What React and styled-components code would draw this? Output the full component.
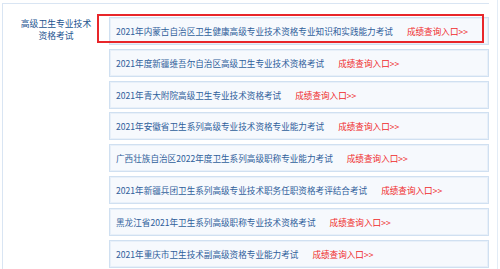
import styled, { createGlobalStyle } from "styled-components";

const exams = [
  { title: "2021年内蒙古自治区卫生健康高级专业技术资格专业知识和实践能力考试", marked: true },
  { title: "2021年度新疆维吾尔自治区高级卫生专业技术资格考试" },
  { title: "2021年青大附院高级卫生专业技术资格考试" },
  { title: "2021年安徽省卫生系列高级专业技术资格专业能力考试" },
  { title: "广西壮族自治区2022年度卫生系列高级职称专业能力考试" },
  { title: "2021年新疆兵团卫生系列高级专业技术职务任职资格考评结合考试" },
  { title: "黑龙江省2021年卫生系列高级职称专业技术资格考试" },
  { title: "2021年重庆市卫生技术副高级资格专业能力考试" },
];

export default function App() {
  return (
    <>
      <GlobalStyle />
      <Page>
        <Frame>
          <LabelCell>
            高级卫生专业技术
            <br />
            资格考试
          </LabelCell>
          <List>
            {exams.map((exam) => (
              <Row key={exam.title}>
                <Title>{exam.title}</Title>
                <Link>成绩查询入口&gt;&gt;</Link>
                {exam.marked && <Highlight />}
              </Row>
            ))}
          </List>
        </Frame>
      </Page>
    </>
  );
}

const GlobalStyle = createGlobalStyle`
  body {
    margin: 0;
    background: #fff;
    font-family: "Noto Sans CJK SC", "Liberation Sans", sans-serif;
    overflow: hidden;
  }
`;

const Page = styled.div`
  width: 498px;
  height: 269px;
  box-sizing: border-box;
  padding: 3px 0 0 2px;
  border-right: 1px solid #e3ecf6;
`;

const Frame = styled.div`
  width: 487px;
  height: 266px;
  box-sizing: border-box;
  display: flex;
  border-left: 1px solid #d9e5f3;
  border-top: 1px solid #d9e5f3;
`;

const LabelCell = styled.div`
  width: 106px;
  flex-shrink: 0;
  padding-top: 14px;
  text-align: center;
  font-size: 8.8px;
  line-height: 12px;
  color: #23548f;
`;

const List = styled.div`
  flex: 1;
  display: flex;
  flex-direction: column;
  gap: 3.8px;
  padding-top: 13px;
`;

const Row = styled.div`
  position: relative;
  height: 28px;
  flex-shrink: 0;
  box-sizing: border-box;
  display: flex;
  align-items: center;
  gap: 14px;
  padding-left: 6px;
  background: #f6f9fd;
  border: 1px solid #d0e0f1;
  box-shadow: inset 0 0 0 1px #e8f0f9;
  font-size: 8.6px;
  white-space: nowrap;
`;

const Title = styled.span`
  color: #2f609b;
`;

const Link = styled.span`
  color: #f02a2a;
`;

const Highlight = styled.div`
  position: absolute;
  left: -13px;
  top: -4px;
  width: 387px;
  height: 29px;
  box-sizing: border-box;
  border: 2px solid #e8262a;
`;
